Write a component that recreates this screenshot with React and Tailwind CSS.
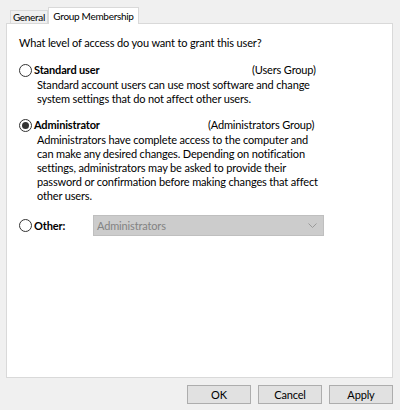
import React from 'react'

function Radio({ checked }) {
  return (
    <span className="w-[13px] h-[13px] rounded-full border border-[#333] bg-white flex items-center justify-center shrink-0">
      {checked && <span className="w-[7px] h-[7px] rounded-full bg-[#333]" />}
    </span>
  )
}

export default function App() {
  const font = { fontFamily: 'Lato, "Noto Sans", sans-serif' }
  return (
    <div className="w-[400px] h-[410px] bg-[#f0f0f0] text-black text-[11px] leading-[14px] tracking-[-0.15px] flex flex-col" style={font}>
      {/* tabs */}
      <div className="flex items-end pl-[10px] pt-[6px] h-[23px] text-[10px] tracking-[-0.3px]">
        <div className="h-[13px] w-[38px] border border-b-0 border-[#d9d9d9] bg-[#f0f0f0] flex items-center justify-center leading-none">General</div>
        <div className="h-[17px] w-[91px] border border-b-0 border-[#d9d9d9] bg-white flex items-center justify-center leading-none relative top-[1px] z-10">Group Membership</div>
      </div>

      {/* panel */}
      <div className="mx-[6px] w-[387px] h-[355px] bg-white border border-[#d9d9d9] pl-[12px] pt-[12px]">
        <div>What level of access do you want to grant this user?</div>

        <div className="mt-[12px] flex items-center gap-[2px] h-[16px]">
          <Radio />
          <span className="font-bold w-[216px]">Standard user</span>
          <span>(Users Group)</span>
        </div>
        <div className="pl-[18px] w-[303px]">
          Standard account users can use most software and change system settings that do not affect other users.
        </div>

        <div className="mt-[11px] flex items-center gap-[2px] h-[16px]">
          <Radio checked />
          <span className="font-bold w-[172px]">Administrator</span>
          <span>(Administrators Group)</span>
        </div>
        <div className="pl-[18px] w-[303px]">
          Administrators have complete access to the computer and can make any desired changes. Depending on notification settings, administrators may be asked to provide their password or confirmation before making changes that affect other users.
        </div>

        <div className="mt-[12px] flex items-center gap-[2px] h-[21px]">
          <Radio />
          <span className="font-bold w-[57px]">Other:</span>
          <div className="w-[231px] h-[21px] bg-[#cccccc] border border-[#bfbfbf] flex items-center justify-between pl-[3px] pr-[6px] text-[#838383]">
            <span>Administrators</span>
            <svg width="9" height="5" viewBox="0 0 9 5"><path d="M0.5 0.5 L4.5 4.5 L8.5 0.5" fill="none" stroke="#9a9a9a" strokeWidth="1" /></svg>
          </div>
        </div>
      </div>

      {/* buttons */}
      <div className="flex justify-end gap-[7px] pr-[7px] mt-[7px]">
        {['OK', 'Cancel', 'Apply'].map(b => (
          <button key={b} className="w-[64px] h-[19px] bg-[#e1e1e1] border border-[#adadad] flex items-center justify-center leading-none">{b}</button>
        ))}
      </div>
    </div>
  )
}
